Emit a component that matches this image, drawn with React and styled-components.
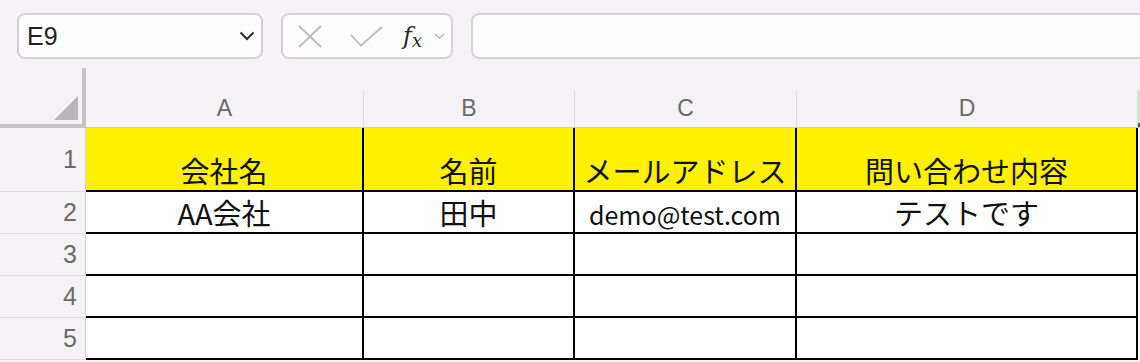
import React from 'react';
import styled, { createGlobalStyle } from 'styled-components';

const GlobalStyle = createGlobalStyle`
  html, body {
    margin: 0;
    background: #f4f2f5;
    overflow: hidden;
  }
  body {
    font-family: "Liberation Sans", Arial, sans-serif;
  }
`;

const Page = styled.div`
  width: 1140px;
  height: 362px;
  overflow: hidden;
  display: flex;
  flex-direction: column;
`;

const Toolbar = styled.div`
  display: flex;
  align-items: center;
  gap: 18px;
  padding: 13px 0 0 17px;
  height: 46px;
`;

const Field = styled.div`
  box-sizing: border-box;
  height: 46px;
  width: ${p => p.$width}px;
  flex-shrink: 0;
  background: #fdfdfd;
  border: 2px solid #d4d2d5;
  border-radius: 8px;
  display: flex;
  align-items: center;
`;

const NameText = styled.span`
  flex: 1;
  padding-left: 8px;
  font-size: 25px;
  color: #222;
`;

const Chevron = styled.svg`
  margin-right: 6px;
`;

const FxGroup = styled.div`
  display: flex;
  align-items: center;
  padding-left: 15px;
`;

const FxLabel = styled.span`
  font-family: "DejaVu Serif", "Liberation Serif", serif;
  font-style: italic;
  font-size: 24px;
  color: #2a2a2a;
  margin-left: 20px;
  line-height: 1;
  span {
    font-size: 18px;
    position: relative;
    top: 3px;
  }
`;

const Sheet = styled.div`
  margin-top: 9px;
  display: grid;
  grid-template-columns: 86px 278px 211px 222px 341px 1fr;
`;

const Corner = styled.div`
  box-sizing: border-box;
  height: 60px;
  border-right: 4px solid #c5c3c6;
  border-bottom: 4px solid #c5c3c6;
  display: flex;
  align-items: flex-end;
  justify-content: flex-end;
  padding: 0 4px 4px 0;
`;

const ColHead = styled.div`
  height: 60px;
  box-sizing: border-box;
  padding-top: 22px;
  border-bottom: 1px solid #cfcdd0;
  display: flex;
`;

const ColLabel = styled.div`
  flex: 1;
  display: flex;
  align-items: center;
  justify-content: center;
  font-size: 23px;
  color: #6a6a6a;
  box-sizing: border-box;
  background: ${p => (p.$active ? '#cfe7d8' : 'transparent')};
  border-right: ${p => (p.$active ? 'none' : '1px solid #dddbde')};
  border-bottom: ${p => (p.$active ? '4px solid #1d6c40' : 'none')};
`;

const RowHead = styled.div`
  box-sizing: border-box;
  height: ${p => p.$h}px;
  border-right: 1px solid #d3d1d4;
  border-bottom: 1px solid #dddbde;
  display: flex;
  align-items: center;
  justify-content: flex-end;
  padding-right: 8px;
  font-size: 25px;
  color: #6a6a6a;
`;

const Cell = styled.div`
  box-sizing: border-box;
  height: ${p => p.$h}px;
  background: ${p => (p.$fill ? '#fff100' : '#ffffff')};
  border-right: 2px solid #000;
  border-bottom: 2px solid #000;
  display: flex;
  align-items: flex-end;
  justify-content: center;
  padding-bottom: 2px;
  font-family: "Noto Sans CJK JP", sans-serif;
  font-size: ${p => (p.$small ? 25 : 29)}px;
  line-height: 1.25;
  color: #111;
  white-space: nowrap;
`;

const Blank = styled.div`
  height: ${p => p.$h}px;
  background: #ffffff;
`;

const rows = [
  { n: 1, h: 64, fill: true, cells: ['会社名', '名前', 'メールアドレス', '問い合わせ内容'] },
  { n: 2, h: 42, cells: ['AA会社', '田中', 'demo@test.com', 'テストです'] },
  { n: 3, h: 42, cells: ['', '', '', ''] },
  { n: 4, h: 42, cells: ['', '', '', ''] },
  { n: 5, h: 42, cells: ['', '', '', ''] },
];

export default function App() {
  return (
    <Page>
      <GlobalStyle />
      <Toolbar>
        <Field $width={246}>
          <NameText>E9</NameText>
          <Chevron width="16" height="10" viewBox="0 0 16 10">
            <polyline points="1.5,1.5 8,8 14.5,1.5" fill="none" stroke="#2b2b2b" strokeWidth="2" />
          </Chevron>
        </Field>
        <Field $width={172}>
          <FxGroup>
            <svg width="24" height="23" viewBox="0 0 24 23">
              <line x1="1" y1="1" x2="23" y2="22" stroke="#bdbbbe" strokeWidth="1.8" />
              <line x1="23" y1="1" x2="1" y2="22" stroke="#bdbbbe" strokeWidth="1.8" />
            </svg>
            <svg width="33" height="21" viewBox="0 0 33 21" style={{ marginLeft: 28 }}>
              <polyline points="1,9 11,19.5 32,1" fill="none" stroke="#bdbbbe" strokeWidth="1.8" />
            </svg>
            <FxLabel>f<span>x</span></FxLabel>
            <svg width="11" height="6" viewBox="0 0 11 6" style={{ marginLeft: 12 }}>
              <polyline points="1,1 5.5,5 10,1" fill="none" stroke="#b3b1b4" strokeWidth="1.4" />
            </svg>
          </FxGroup>
        </Field>
        <Field $width={700} />
      </Toolbar>

      <Sheet>
        <Corner>
          <svg width="24" height="24" viewBox="0 0 24 24">
            <polygon points="24,0 24,24 0,24" fill="#b9b7ba" />
          </svg>
        </Corner>
        {['A', 'B', 'C', 'D'].map(c => (
          <ColHead key={c}>
            <ColLabel>{c}</ColLabel>
          </ColHead>
        ))}
        <ColHead>
          <ColLabel $active />
        </ColHead>

        {rows.map(r => (
          <React.Fragment key={r.n}>
            <RowHead $h={r.h}>{r.n}</RowHead>
            {r.cells.map((t, i) => (
              <Cell key={i} $h={r.h} $fill={r.fill} $small={t.includes('@')}>
                {t}
              </Cell>
            ))}
            <Blank $h={r.h} />
          </React.Fragment>
        ))}
      </Sheet>
    </Page>
  );
}
